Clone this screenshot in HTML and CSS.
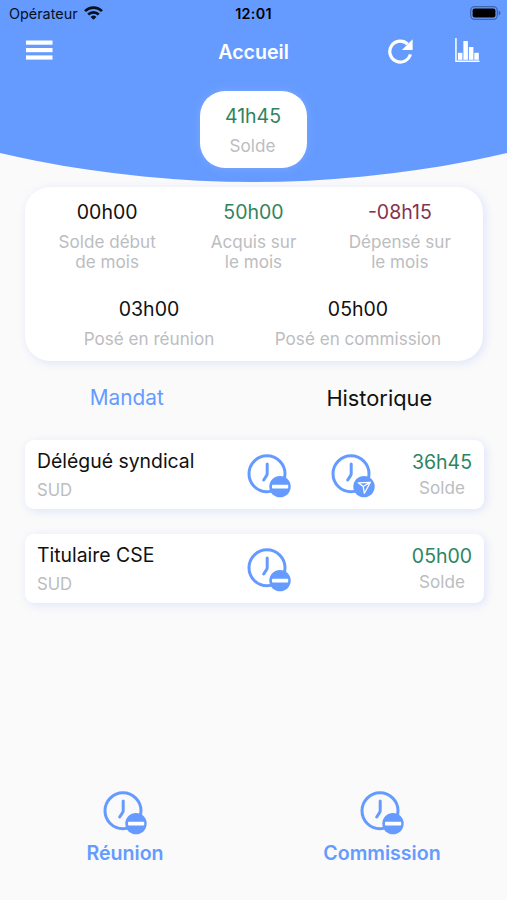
FILE: index.html
```html
<!DOCTYPE html>
<html lang="fr">
<head>
	<meta charset="utf-8">
	<meta name="viewport" content="width=device-width, initial-scale=1">
	<title>Accueil</title>
	<link rel="stylesheet" href="styles.css">
</head>
<body>
<!-- shared icons -->
<svg class="defs" width="0" height="0">
	<symbol id="clock" viewBox="0 0 44 44">
		<circle cx="20" cy="19.8" r="18" fill="none" stroke="#659bff" stroke-width="3"/>
		<path d="M20.2 10v9.4q0 1.3-.8 2.5L16.7 26" fill="none" stroke="#659bff" stroke-width="3" stroke-linecap="round"/>
		<circle cx="33" cy="32.6" r="10.7" fill="#659bff"/>
	</symbol>
	<symbol id="clock-minus" viewBox="0 0 44 44">
		<use href="#clock"/>
		<rect x="25" y="30.8" width="16.2" height="3.8" rx=".8" fill="#fff"/>
	</symbol>
	<symbol id="clock-send" viewBox="0 0 44 44">
		<use href="#clock"/>
		<path d="M27.2 28.8l12.2-.5-6 11-1.2-6.8zM32.2 32.5l7.2-4.2" fill="none" stroke="#fff" stroke-width="1.3" stroke-linejoin="round"/>
	</symbol>
</svg>

<header class="header">
	<div class="status">
		<div class="carrier">
			<span>Opérateur</span>
			<svg width="19" height="14" viewBox="0 0 19 14" fill="none" stroke="#07101f" stroke-width="2.7">
				<path d="M1 5.1a12.2 12.2 0 0 1 17 0"/>
				<path d="M4.2 8.5a7.6 7.6 0 0 1 10.6 0"/>
				<path d="M9.5 13.8L6.6 10.9a4.2 4.2 0 0 1 5.8 0z" fill="#07101f" stroke="none"/>
			</svg>
		</div>
		<div class="time">12:01</div>
		<div class="battery">
			<svg width="31" height="14" viewBox="0 0 31 14">
				<rect x=".7" y=".7" width="26.6" height="12.6" rx="3.8" fill="none" stroke="#3f65ae" stroke-width="1.3"/>
				<rect x="2.6" y="2.6" width="22.8" height="8.8" rx="2" fill="#000"/>
				<path d="M28.6 4.6q2 .8 2 2.4t-2 2.4z" fill="#3f65ae"/>
			</svg>
		</div>
	</div>
	<div class="navbar">
		<svg class="menu" width="27" height="20" viewBox="0 0 27 20" fill="#fff">
			<rect y=".5" width="26.5" height="4.2"/>
			<rect y="8" width="26.5" height="4.2"/>
			<rect y="15.4" width="26.5" height="4.2"/>
		</svg>
		<h1>Accueil</h1>
		<div class="actions">
			<svg width="26" height="26" viewBox="0 0 26 26">
				<path d="M23.4 16.4A10.5 10.5 0 1 1 20.6 6" fill="none" stroke="#fff" stroke-width="3.2"/>
				<path d="M25.6 1.2v10.7H14.9z" fill="#fff"/>
			</svg>
			<svg width="25" height="25" viewBox="0 0 25 25" fill="#fff">
				<path d="M.2 0h1.5v22.6h22.8V24H.2z"/>
				<rect x="2.9" y="14.8" width="4.5" height="7"/>
				<rect x="8.4" y="3" width="4.5" height="18.8"/>
				<rect x="13.9" y="9" width="4.5" height="12.8"/>
				<rect x="19.3" y="14.8" width="4.5" height="7"/>
			</svg>
		</div>
	</div>
	<div class="balance">
		<div class="hours green">41h45</div>
		<div class="label">Solde</div>
	</div>
</header>

<main>
	<section class="summary">
		<div class="row">
			<div class="stat"><div class="hours">00h00</div><div class="label">Solde début<br>de mois</div></div>
			<div class="stat"><div class="hours green">50h00</div><div class="label">Acquis sur<br>le mois</div></div>
			<div class="stat"><div class="hours red">-08h15</div><div class="label">Dépensé sur<br>le mois</div></div>
		</div>
		<div class="row row-two">
			<div class="stat"><div class="hours">03h00</div><div class="label">Posé en réunion</div></div>
			<div class="stat"><div class="hours">05h00</div><div class="label">Posé en commission</div></div>
		</div>
	</section>

	<nav class="tabs">
		<a class="active">Mandat</a>
		<a>Historique</a>
	</nav>

	<section class="mandates">
		<div class="mandate">
			<div class="who"><div class="name">Délégué syndical</div><div class="label">SUD</div></div>
			<svg class="clock"><use href="#clock-minus"/></svg>
			<svg class="clock"><use href="#clock-send"/></svg>
			<div class="total"><div class="hours green">36h45</div><div class="label">Solde</div></div>
		</div>
		<div class="mandate">
			<div class="who"><div class="name">Titulaire CSE</div><div class="label">SUD</div></div>
			<svg class="clock"><use href="#clock-minus"/></svg>
			<span></span>
			<div class="total"><div class="hours green">05h00</div><div class="label">Solde</div></div>
		</div>
	</section>
</main>

<footer class="footer">
	<a><svg class="clock"><use href="#clock-minus"/></svg>Réunion</a>
	<a><svg class="clock"><use href="#clock-minus"/></svg>Commission</a>
</footer>
</body>
</html>
```
FILE: styles.css
```css
* {
	box-sizing: border-box;
}
body {
	margin: 0;
	height: 900px;
	display: flex;
	flex-direction: column;
	overflow: hidden;
	background: #fafafa;
	color: #111;
	font-family: Inter, "Liberation Sans", sans-serif;
}
svg {
	display: block;
}
.defs {
	position: absolute;
}

/* header */
.header {
	height: 182px;
	flex: none;
	background: #659bff;
	clip-path: circle(1122px at 50% -940px);
}
.status {
	display: grid;
	grid-template-columns: 1fr auto 1fr;
	align-items: center;
	height: 28px;
	padding: 0 7px 0 9px;
	color: #07101f;
	font-size: 14.4px;
}
.carrier {
	display: flex;
	align-items: center;
	gap: 6px;
}
.carrier span {
	margin-top: -1px;
}
.carrier svg {
	margin-top: -2px;
}
.time {
	margin: -1px 2px 0 0;
	font-weight: 600;
	letter-spacing: .3px;
	color: #000;
}
.battery {
	justify-self: end;
	margin: -2px -1px 0 0;
}
.navbar {
	display: grid;
	grid-template-columns: 1fr auto 1fr;
	align-items: center;
	height: 46px;
	padding: 0 27px 0 27px;
	color: #fff;
}
.menu {
	margin: -2px 0 0 -1px;
}
.navbar h1 {
	margin: 2px 0 0;
	font-size: 19.6px;
	font-weight: 600;
}
.actions {
	display: flex;
	justify-content: flex-end;
	gap: 42px;
}
.balance {
	width: 107px;
	height: 77px;
	margin: 17px auto 0;
	padding-top: 13px;
	border-radius: 25px;
	background: #fff;
	box-shadow: 0 0 10px rgba(140, 175, 255, .6);
	text-align: center;
}

/* texts */
.hours {
	font-size: 19.5px;
	line-height: 24px;
}
.label {
	font-size: 17.1px;
	line-height: 20px;
	color: #bbbdc0;
}
.balance .label {
	margin: 8px 2px 0 0;
}
.balance .hours {
	margin-right: 1px;
}
.green {
	color: #2f8460;
}
.red {
	color: #853350;
}

.summary {
	height: 174px;
	margin: 5px 24px 0 25px;
	padding-top: 13px;
	border-radius: 25px;
	background: #fff;
	box-shadow: 2px 2px 10px rgba(101, 135, 255, .18);
	text-align: center;
}
.row {
	display: flex;
	justify-content: center;
	padding: 0 10px 0 9px;
}
.row .stat {
	width: 146.5px;
}
.row .label {
	margin-top: 8px;
}
.row-two {
	margin-top: 25px;
}
.row-two .stat {
	width: 209px;
}

.tabs {
	display: flex;
	height: 79px;
	padding-top: 22px;
	font-size: 21.8px;
	line-height: 31px;
	text-align: center;
}
.tabs a {
	width: 50%;
}
.tabs a:last-child {
	padding-right: 2px;
}
.tabs .active {
	color: #659bff;
	font-size: 20.8px;
	line-height: 30px;
}

.mandates {
	display: grid;
	gap: 25px;
	margin: 0 23px 0 25px;
}
.mandate {
	display: grid;
	grid-template-columns: 210px 84px 76px 70px;
	height: 69px;
	padding: 8px 7px 0 12px;
	border-radius: 9px;
	background: #fff;
	box-shadow: 2px 2px 10px rgba(101, 135, 255, .18);
}
.name {
	font-size: 19.4px;
	line-height: 26px;
}
.who .label {
	margin-top: 6px;
	font-size: 16.7px;
}
.clock {
	width: 44px;
	height: 44px;
	margin-top: 6px;
}
.total {
	padding-top: 2px;
	text-align: center;
}
.total .label {
	margin-top: 4px;
}

/* bottom actions */
.footer {
	display: flex;
	justify-content: center;
	margin-top: auto;
	height: 115px;
	color: #659bff;
	font-size: 19.6px;
	font-weight: 600;
	line-height: 24px;
}
.footer a {
	display: flex;
	flex-direction: column;
	align-items: center;
	width: 257px;
	flex: none;
}
.footer .clock {
	margin: 6px 0 6px;
}
```
